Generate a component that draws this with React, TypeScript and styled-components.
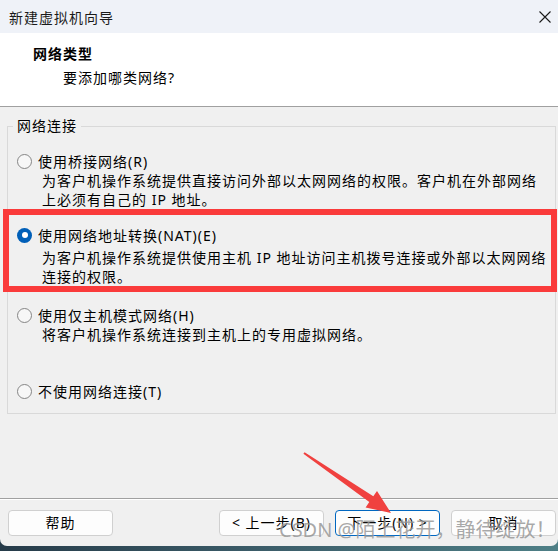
import styled, { createGlobalStyle } from 'styled-components';

const GlobalStyle = createGlobalStyle`
  html, body {
    margin: 0;
    padding: 0;
  }
  body {
    font-family: "Noto Sans", "Noto Sans CJK SC", sans-serif;
  }
`;

const Desktop = styled.div`
  width: 558px;
  height: 551px;
  overflow: hidden;
  background: linear-gradient(90deg, #263b49 0%, #3d5f6b 50%, #4e7f86 100%);
  position: relative;
`;

const Window = styled.div`
  position: relative;
  height: 546px;
  display: flex;
  flex-direction: column;
  background: #f0f0f0;
  border-radius: 0 0 7px 7px;
  overflow: hidden;
  color: #000;
  font-size: 14px;
  letter-spacing: 1px;
`;

const TitleBar = styled.div`
  height: 33px;
  flex: none;
  display: flex;
  align-items: center;
  justify-content: space-between;
  padding: 0 7px 0 9px;
  background: #eff2f8;
  color: #1a1a1a;
`;

const CloseIcon = styled.svg`
  width: 12px;
  height: 12px;
  display: block;
`;

const Header = styled.div`
  height: 74px;
  flex: none;
  box-sizing: border-box;
  background: #fff;
  border-bottom: 1px solid #a0a0a0;
  padding: 11px 0 0 33px;
`;

const HeaderTitle = styled.div`
  font-weight: bold;
  line-height: 20px;
`;

const HeaderSub = styled.div`
  line-height: 20px;
  margin: 4px 0 0 30px;
`;

const Body = styled.div`
  flex: 1;
  padding: 10px 2px 0 7px;
`;

const GroupBox = styled.fieldset`
  margin: 0;
  padding: 16px 9px 12px 9px;
  border: 1px solid #d9d9d9;
  min-width: 0;
`;

const Legend = styled.legend`
  padding: 0 4px;
  margin-left: -4px;
  line-height: 18px;
`;

const OptionRow = styled.div<{ $top: number }>`
  display: flex;
  align-items: center;
  gap: 6px;
  height: 20px;
  margin-top: ${(p) => p.$top}px;
  white-space: nowrap;
`;

const Radio = styled.span<{ $checked?: boolean }>`
  width: 15px;
  height: 15px;
  flex: none;
  box-sizing: border-box;
  border-radius: 50%;
  position: relative;
  border: ${(p) => (p.$checked ? 'none' : '1px solid #858585')};
  background: ${(p) => (p.$checked ? '#005fb8' : '#f7f7f7')};

  &::after {
    content: '';
    display: ${(p) => (p.$checked ? 'block' : 'none')};
    position: absolute;
    left: 4.5px;
    top: 4.5px;
    width: 6px;
    height: 6px;
    border-radius: 50%;
    background: #fff;
  }
`;

const Desc = styled.div<{ $top: number }>`
  margin: ${(p) => p.$top}px 0 0 25px;
  line-height: 19px;
  white-space: nowrap;
`;

const Separator = styled.div`
  flex: none;
  border-top: 1px solid #a0a0a0;
  border-bottom: 1px solid #fff;
`;

const Footer = styled.div`
  height: 46px;
  flex: none;
  box-sizing: border-box;
  padding: 10px 2px 0 8px;
  display: flex;
  align-items: flex-start;
`;

const Spacer = styled.div`
  flex: 1;
`;

const Button = styled.button<{ $primary?: boolean; $gap?: number }>`
  width: 105px;
  height: 26px;
  margin-left: ${(p) => p.$gap ?? 0}px;
  box-sizing: border-box;
  border-radius: 4px;
  border: 1px solid ${(p) => (p.$primary ? '#0067c0' : '#d0d0d0')};
  background: #fdfdfd;
  font-family: inherit;
  font-size: 14px;
  letter-spacing: 1px;
  color: #000;
  padding: 0;
  line-height: 24px;
`;

const HighlightBox = styled.div`
  position: absolute;
  left: 3px;
  top: 209px;
  width: 554px;
  height: 83px;
  box-sizing: border-box;
  border: 6px solid #fa3b3b;
  pointer-events: none;
`;

const ArrowLayer = styled.svg`
  position: absolute;
  left: 0;
  top: 0;
  width: 558px;
  height: 551px;
  pointer-events: none;
`;

const Watermark = styled.div`
  position: absolute;
  left: 279px;
  top: 517px;
  font-size: 20px;
  line-height: 26px;
  letter-spacing: 0;
  color: rgba(110, 110, 110, 0.6);
  text-shadow: 0 0 1px rgba(255, 255, 255, 0.6);
  white-space: nowrap;
  pointer-events: none;
`;

export default function App() {
  return (
    <>
      <GlobalStyle />
      <Desktop>
        <Window>
          <TitleBar>
            <span>新建虚拟机向导</span>
            <CloseIcon viewBox="0 0 12 12">
              <path d="M0.5 0.5 L11.5 11.5 M11.5 0.5 L0.5 11.5" stroke="#1a1a1a" strokeWidth="1.1" fill="none" />
            </CloseIcon>
          </TitleBar>
          <Header>
            <HeaderTitle>网络类型</HeaderTitle>
            <HeaderSub>要添加哪类网络?</HeaderSub>
          </Header>
          <Body>
            <GroupBox>
              <Legend>网络连接</Legend>
              <OptionRow $top={0}>
                <Radio />
                <span>使用桥接网络(R)</span>
              </OptionRow>
              <Desc $top={0}>
                为客户机操作系统提供直接访问外部以太网网络的权限。客户机在外部网络
                <br />
                上必须有自己的 IP 地址。
              </Desc>
              <OptionRow $top={16}>
                <Radio $checked />
                <span>使用网络地址转换(NAT)(E)</span>
              </OptionRow>
              <Desc $top={3}>
                为客户机操作系统提供使用主机 IP 地址访问主机拨号连接或外部以太网网络
                <br />
                连接的权限。
              </Desc>
              <OptionRow $top={19}>
                <Radio />
                <span>使用仅主机模式网络(H)</span>
              </OptionRow>
              <Desc $top={0}>将客户机操作系统连接到主机上的专用虚拟网络。</Desc>
              <OptionRow $top={37}>
                <Radio />
                <span>不使用网络连接(T)</span>
              </OptionRow>
            </GroupBox>
          </Body>
          <Separator />
          <Footer>
            <Button>帮助</Button>
            <Spacer />
            <Button>&lt; 上一步(B)</Button>
            <Button $primary $gap={11}>下一步(N) &gt;</Button>
            <Button $gap={11}>取消</Button>
          </Footer>
          <HighlightBox />
        </Window>
        <ArrowLayer viewBox="0 0 558 551">
          <polygon
            points="304.6,452.2 373.3,496.3 377,491 391,513 365.6,507.4 369.3,502.1 303.4,453.8"
            fill="#f0413f"
          />
        </ArrowLayer>
        <Watermark>CSDN @陌上花开，静待绽放！</Watermark>
      </Desktop>
    </>
  );
}
